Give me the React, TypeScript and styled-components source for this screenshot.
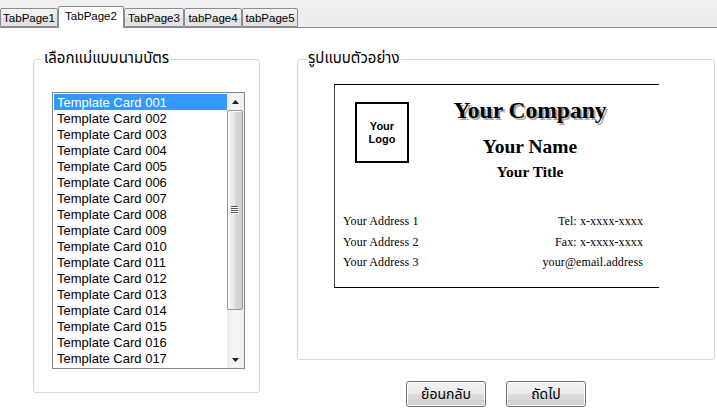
import React from "react";
import styled, { createGlobalStyle } from "styled-components";

const GlobalStyle = createGlobalStyle`
  html, body {
    margin: 0;
    padding: 0;
    background: #fff;
  }
  body {
    font-family: "Liberation Sans", Arial, sans-serif;
    font-size: 13px;
    color: #000;
  }
`;

const thai = `Tahoma, "Noto Sans Thai", "Noto Sans Thai UI", Loma, Garuda, "Liberation Sans", sans-serif`;

const Window = styled.div`
  width: 717px;
  height: 416px;
  overflow: hidden;
  background: #fff;
`;

const TabStrip = styled.div`
  display: flex;
  align-items: flex-end;
  height: 27px;
  background: linear-gradient(#f1f1f1, #ececec);
  border-bottom: 1px solid #898c95;
`;

const Tab = styled.div<{ $active?: boolean; $w: number }>`
  box-sizing: border-box;
  display: flex;
  align-items: center;
  justify-content: center;
  width: ${(p) => p.$w}px;
  height: ${(p) => (p.$active ? "22px" : "19px")};
  margin-bottom: ${(p) => (p.$active ? "-1px" : "0")};
  padding-bottom: ${(p) => (p.$active ? "3px" : "0")};
  border: 1px solid #898c95;
  border-bottom: ${(p) => (p.$active ? "none" : "1px solid #898c95")};
  border-radius: 2px 2px 0 0;
  background: ${(p) =>
    p.$active ? "#fff" : "linear-gradient(#f3f3f3 0%, #ebebeb 50%, #dedede 51%, #e5e5e5 100%)"};
  font-size: 11.5px;
  color: #000;
  position: relative;
  z-index: ${(p) => (p.$active ? 1 : 0)};
`;

const Main = styled.div`
  display: flex;
  gap: 37px;
  padding: 31px 0 0 33px;
`;

const GroupBox = styled.div<{ $w: number; $h: number }>`
  position: relative;
  box-sizing: border-box;
  width: ${(p) => p.$w}px;
  height: ${(p) => p.$h}px;
  border: 1px solid #d5d9dc;
  border-radius: 3px;
`;

const Legend = styled.span`
  position: absolute;
  top: -10px;
  left: 8px;
  padding: 0 2px;
  background: #fff;
  font-family: ${thai};
  font-size: 15px;
  line-height: 18px;
  white-space: nowrap;
`;

const RightColumn = styled.div`
  display: flex;
  flex-direction: column;
`;

/* list box */

const ListBox = styled.div`
  box-sizing: border-box;
  display: flex;
  width: 193px;
  height: 277px;
  margin: 32px 0 0 18px;
  border: 1px solid #828790;
  background: #fff;
`;

const Items = styled.div`
  flex: 1;
  padding: 1px 0 0 1px;
  overflow: hidden;
`;

const Item = styled.div<{ $selected?: boolean }>`
  height: 16px;
  line-height: 17px;
  padding-left: 3px;
  font-size: 13px;
  white-space: nowrap;
  color: ${(p) => (p.$selected ? "#fff" : "#000")};
  background: ${(p) => (p.$selected ? "#3399ff" : "transparent")};
`;

const ScrollBar = styled.div`
  display: flex;
  flex-direction: column;
  width: 17px;
  background: linear-gradient(to right, #e9e9e9, #f6f6f6 40%, #f0f0f0);
`;

const ArrowButton = styled.div`
  display: flex;
  align-items: center;
  justify-content: center;
  height: 17px;
`;

const Track = styled.div`
  flex: 1;
  display: flex;
  flex-direction: column;
`;

const Thumb = styled.div`
  box-sizing: border-box;
  display: flex;
  align-items: center;
  justify-content: center;
  height: 200px;
  margin: 0 1px 0 0;
  border: 1px solid #979797;
  border-radius: 2px;
  background: linear-gradient(to right, #f4f4f4, #e8e8e8 45%, #d6d6d6 55%, #cfcfcf);
  box-shadow: inset 1px 1px 0 #fdfdfd;
`;

/* card preview */

const Card = styled.div`
  box-sizing: border-box;
  display: flex;
  flex-direction: column;
  width: 325px;
  height: 204px;
  margin: 24px 0 0 36px;
  padding-top: 12px;
  border-top: 1px solid #000;
  border-bottom: 1px solid #000;
  border-left: 1px solid #444;
  background: #fff;
  font-family: "Liberation Serif", "Times New Roman", serif;
`;

const CardTop = styled.div`
  display: flex;
  padding-left: 20px;
`;

const LogoBox = styled.div`
  box-sizing: border-box;
  display: flex;
  align-items: center;
  justify-content: center;
  width: 54px;
  height: 61px;
  margin-top: 5px;
  border: 2px solid #000;
  font-family: "Liberation Sans", Arial, sans-serif;
  font-weight: bold;
  font-size: 11px;
  line-height: 13px;
  text-align: center;
`;

const Headline = styled.div`
  display: flex;
  flex-direction: column;
  align-items: center;
  width: 242px;
`;

const Company = styled.div`
  font-size: 23.5px;
  font-weight: bold;
  line-height: 26px;
  text-shadow: 2px 2px 0 #a8a8a8;
`;

const Name = styled.div`
  margin-top: 12px;
  font-size: 19.5px;
  font-weight: bold;
  line-height: 24px;
`;

const JobTitle = styled.div`
  margin-top: 3px;
  font-size: 15.5px;
  font-weight: bold;
  line-height: 20px;
`;

const Contacts = styled.div`
  display: flex;
  flex-direction: column;
  margin-top: 29px;
  padding: 0 16px 0 8px;
`;

const ContactRow = styled.div`
  display: flex;
  justify-content: space-between;
  height: 20.5px;
  line-height: 20.5px;
  font-size: 12px;
  letter-spacing: 0.1px;
`;

/* buttons */

const ButtonRow = styled.div`
  display: flex;
  gap: 20px;
  margin-top: 21px;
  padding-left: 109px;
`;

const Button = styled.button`
  box-sizing: border-box;
  width: 80px;
  height: 26px;
  padding: 0;
  border: 1px solid #707070;
  border-radius: 3px;
  background: linear-gradient(#f2f2f2 0%, #ebebeb 50%, #dddddd 51%, #cfcfcf 100%);
  box-shadow: inset 0 0 0 1px #fbfbfb;
  font-family: ${thai};
  font-size: 14px;
  color: #000;
`;

const tabs = [
  { label: "TabPage1", w: 58 },
  { label: "TabPage2", w: 66, active: true },
  { label: "TabPage3", w: 60 },
  { label: "tabPage4", w: 58 },
  { label: "tabPage5", w: 56 },
];

const templates = Array.from({ length: 17 }, (_, i) => `Template Card ${String(i + 1).padStart(3, "0")}`);

const contacts = [
  ["Your Address 1", "Tel: x-xxxx-xxxx"],
  ["Your Address 2", "Fax: x-xxxx-xxxx"],
  ["Your Address 3", "your@email.address"],
];

function Arrow({ down }: { down?: boolean }) {
  return (
    <svg width="7" height="4" viewBox="0 0 7 4">
      <path d={down ? "M0 0h7L3.5 4z" : "M3.5 0L7 4H0z"} fill="#1c1c1c" />
    </svg>
  );
}

function Grip() {
  return (
    <svg width="8" height="8" viewBox="0 0 8 8">
      {[0, 2, 4, 6].map((y) => (
        <g key={y}>
          <rect x="0" y={y} width="7" height="1" fill="#555" />
          <rect x="1" y={y + 1} width="7" height="1" fill="#fff" />
        </g>
      ))}
    </svg>
  );
}

export default function App() {
  return (
    <Window>
      <GlobalStyle />
      <TabStrip>
        {tabs.map((t) => (
          <Tab key={t.label} $w={t.w} $active={t.active}>
            {t.label}
          </Tab>
        ))}
      </TabStrip>

      <Main>
        <GroupBox $w={227} $h={334}>
          <Legend>เลือกแม่แบบนามบัตร</Legend>
          <ListBox>
            <Items>
              {templates.map((name, i) => (
                <Item key={name} $selected={i === 0}>
                  {name}
                </Item>
              ))}
            </Items>
            <ScrollBar>
              <ArrowButton>
                <Arrow />
              </ArrowButton>
              <Track>
                <Thumb>
                  <Grip />
                </Thumb>
              </Track>
              <ArrowButton>
                <Arrow down />
              </ArrowButton>
            </ScrollBar>
          </ListBox>
        </GroupBox>

        <RightColumn>
          <GroupBox $w={418} $h={301}>
            <Legend>รูปแบบตัวอย่าง</Legend>
            <Card>
              <CardTop>
                <LogoBox>
                  Your
                  <br />
                  Logo
                </LogoBox>
                <Headline>
                  <Company>Your Company</Company>
                  <Name>Your Name</Name>
                  <JobTitle>Your Title</JobTitle>
                </Headline>
              </CardTop>
              <Contacts>
                {contacts.map(([left, right]) => (
                  <ContactRow key={left}>
                    <span>{left}</span>
                    <span>{right}</span>
                  </ContactRow>
                ))}
              </Contacts>
            </Card>
          </GroupBox>
          <ButtonRow>
            <Button>ย้อนกลับ</Button>
            <Button>ถัดไป</Button>
          </ButtonRow>
        </RightColumn>
      </Main>
    </Window>
  );
}
